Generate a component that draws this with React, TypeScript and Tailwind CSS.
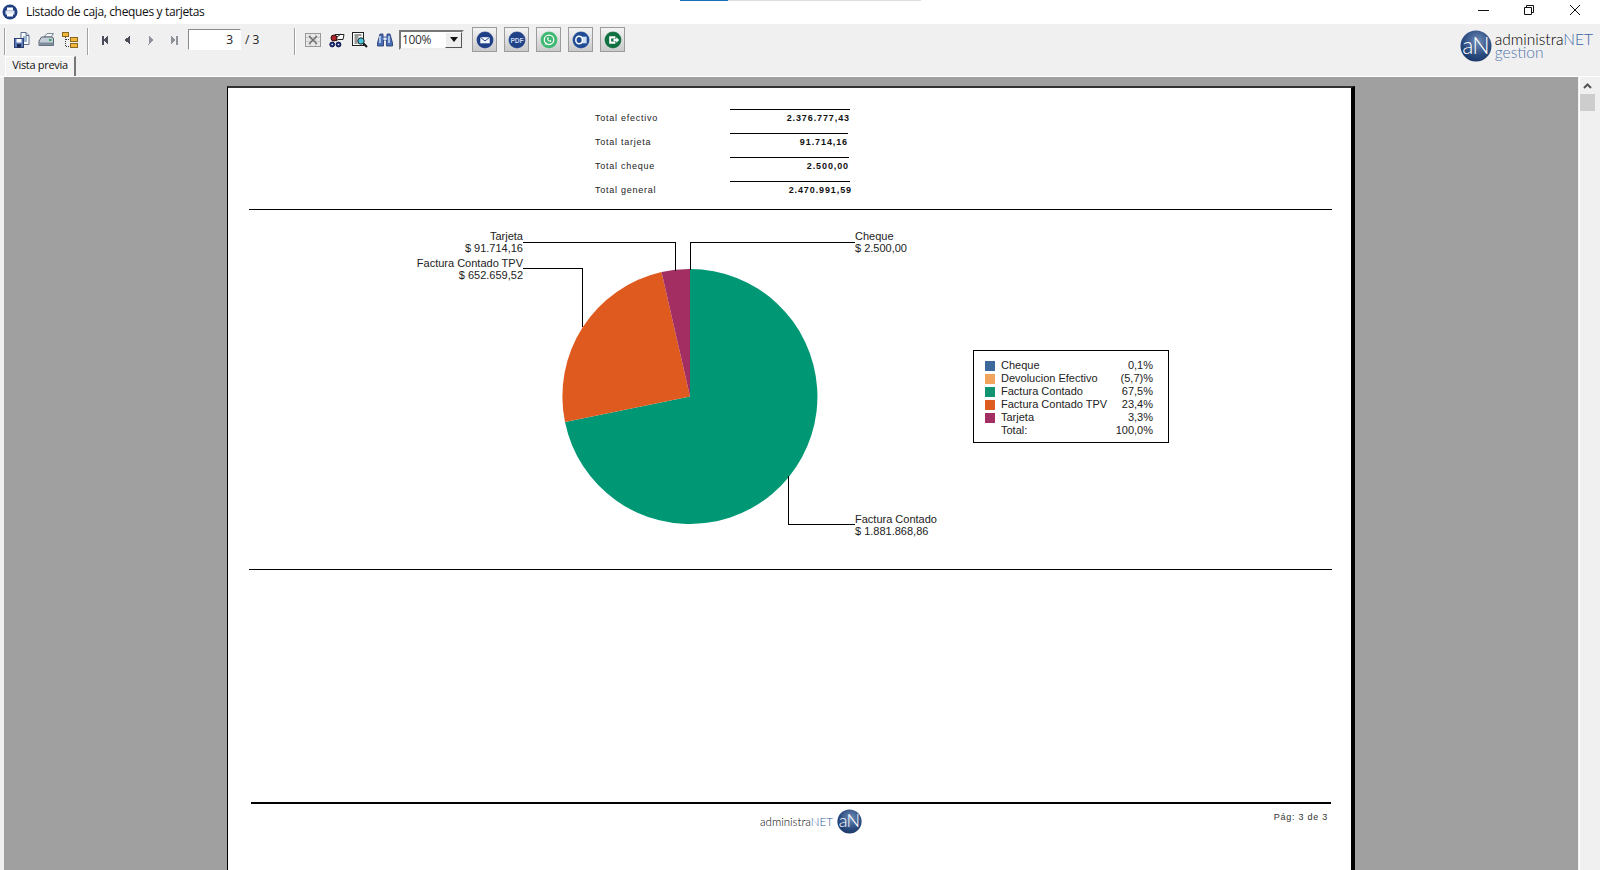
import React from "react";

const UI = "font-['Open_Sans','Noto_Sans',sans-serif]";
const RPT = "font-['Liberation_Sans',Arial,sans-serif]";

function Sep({ ml }: { ml: string }) {
  return <div className={`${ml} w-[2px] h-[27px] self-end border-l border-[#a0a0a0] border-r-white border-r`} />;
}

function SaveIcon() {
  return (
    <svg width="16" height="16" viewBox="0 0 16 16">
      <path d="M7 0.5h5l3 3v9H7z" fill="#fff" stroke="#5a6f8f" />
      <path d="M12 .5v3h3" fill="#cfd8e6" stroke="#5a6f8f" />
      <path d="M9 5h4M9 7h4M9 9h4" stroke="#3b6ea5" />
      <rect x="0.5" y="6.5" width="9" height="9" fill="#5a78b5" stroke="#2c3f74" />
      <rect x="2.5" y="7" width="5" height="3.5" fill="#fff" />
      <rect x="3" y="12" width="4" height="3.5" fill="#1d2c57" />
    </svg>
  );
}
function PrintIcon() {
  return (
    <svg width="16" height="14" viewBox="0 0 16 14">
      <path d="M6 4L9 .6h6.5L13 4z" fill="#fff" stroke="#6f7f92" />
      <path d="M1 8L3.5 4h10q2 0 2 2v6.5H1z" fill="#c3ced9" stroke="#55626f" />
      <path d="M1 9.5h14.5v3H1z" fill="#7d8b9b" />
      <rect x="11" y="6" width="2.5" height="2" fill="#3aa65c" />
    </svg>
  );
}
function TreeIcon() {
  return (
    <svg width="16" height="16" viewBox="0 0 16 16" shapeRendering="crispEdges">
      <rect x="0.5" y="0.5" width="6" height="4" fill="#f2b63c" stroke="#8a6a20" />
      <rect x="8.5" y="5.5" width="6.5" height="4" fill="#f2b63c" stroke="#8a6a20" />
      <rect x="8.5" y="11.5" width="6.5" height="4" fill="#f2b63c" stroke="#8a6a20" />
      <path d="M3.5 5v9.5H8M4 7.5h4" stroke="#333" strokeDasharray="1 1" fill="none" />
    </svg>
  );
}
function Nav({ kind }: { kind: "first" | "prev" | "next" | "last" }) {
  const color = kind === "first" || kind === "prev" ? "#4a4f57" : "#8f949b";
  return (
    <svg width="16" height="16" viewBox="0 0 16 16" shapeRendering="crispEdges">
      {kind === "first" && <rect x="5" y="3.5" width="1.5" height="9" fill={color} />}
      {kind === "first" && <path d="M11 3.5v9L6.5 8z" fill={color} />}
      {kind === "prev" && <path d="M11 3.5v9L5.5 8z" fill={color} />}
      {kind === "next" && <path d="M5.5 3.5v9L11 8z" fill={color} />}
      {kind === "last" && <path d="M5 3.5v9L10 8z" fill={color} />}
      {kind === "last" && <rect x="10" y="3.5" width="1.5" height="9" fill={color} />}
    </svg>
  );
}
function XBoxIcon() {
  return (
    <svg width="16" height="14" viewBox="0 0 16 14" shapeRendering="crispEdges">
      <rect x="0.5" y="0.5" width="15" height="13" fill="#e8e8e8" stroke="#9a9a9a" />
      <path d="M1 4h14M5 1v12M10 1v12M1 8h14" stroke="#c9c9c9" />
      <path d="M4 3l8 8M12 3l-8 8" stroke="#6a6a6a" strokeWidth="1.4" shapeRendering="auto" />
    </svg>
  );
}
function GearIcon() {
  return (
    <svg width="16" height="16" viewBox="0 0 16 16">
      <path d="M6 2.5h9l-1 5H9L7 9" fill="#fff" stroke="#222" />
      <path d="M8 5l4-3" stroke="#222" />
      <circle cx="5" cy="6" r="3" fill="#a6252a" stroke="#3a0d10" />
      <circle cx="3.2" cy="12.5" r="2.4" fill="#1c2f8a" stroke="#0b1240" />
      <circle cx="3.2" cy="12.5" r="0.8" fill="#fff" />
      <circle cx="9.5" cy="12.5" r="2.4" fill="#1c2f8a" stroke="#0b1240" />
      <circle cx="9.5" cy="12.5" r="0.8" fill="#fff" />
    </svg>
  );
}
function DocSearchIcon() {
  return (
    <svg width="16" height="16" viewBox="0 0 16 16">
      <rect x="0.5" y="0.5" width="11" height="13" fill="#fff" stroke="#222" />
      <path d="M2.5 3h7M2.5 5h4M2.5 7h3M2.5 9h3M2.5 11h3" stroke="#333" />
      <circle cx="9" cy="9" r="3.2" fill="#46c6d8" stroke="#222" />
      <path d="M11.5 11.5L15 15" stroke="#111" strokeWidth="2" />
    </svg>
  );
}
function BinocularsIcon() {
  return (
    <svg width="16" height="14" viewBox="0 0 16 14">
      <path d="M3 1h3v3h4V1h3l2.5 9v3H9.5V7h-3v6H.5v-3z" fill="#4b6fb3" stroke="#1f3370" strokeWidth="0.8" />
      <rect x="2" y="3" width="2" height="7" fill="#a9c1e8" />
      <rect x="11" y="3" width="2" height="7" fill="#a9c1e8" />
      <rect x="6.5" y="4.5" width="3" height="2.5" fill="#dbe6f6" />
    </svg>
  );
}

function RoundBtn({ ml, color, children }: { ml: string; color: string; children: React.ReactNode }) {
  return (
    <div className={`${ml} w-[25px] h-[25px] flex items-center justify-center border border-[#9c9c9c] bg-gradient-to-b from-[#f4f4f4] to-[#c9c9c9]`}>
      <svg width="18" height="18" viewBox="0 0 19 19">
        <circle cx="9.5" cy="9.5" r="9" fill={color} />
        <circle cx="9.5" cy="9.5" r="9" fill="none" stroke="#fff" strokeOpacity="0.25" />
        {children}
      </svg>
    </div>
  );
}

function LogoMark({ size }: { size: number }) {
  const gid = `lg${size}`;
  return (
    <svg width={size} height={size} viewBox="0 0 32 32" className="shrink-0">
      <defs>
        <radialGradient id={gid} cx="0.55" cy="0.35" r="0.75">
          <stop offset="0" stopColor="#6f8db8" />
          <stop offset="0.6" stopColor="#2c4c80" />
          <stop offset="1" stopColor="#14305f" />
        </radialGradient>
      </defs>
      <circle cx="16" cy="16" r="15.5" fill={`url(#${gid})`} />
      <text x="15.5" y="23.5" textAnchor="middle" fill="#fff" fontSize="23" fontFamily="Lato, sans-serif" fontWeight="300" letterSpacing="-1">aN</text>
    </svg>
  );
}

const totals = [
  { label: "Total efectivo", value: "2.376.777,43", lineW: "w-[120px]", valPr: "pr-0" },
  { label: "Total tarjeta", value: "91.714,16", lineW: "w-[118px]", valPr: "pr-0" },
  { label: "Total cheque", value: "2.500,00", lineW: "w-[119px]", valPr: "pr-0" },
  { label: "Total general", value: "2.470.991,59", lineW: "w-[120px]", valPr: "-mr-[2px]" },
];

const legend = [
  { name: "Cheque", pct: "0,1%", swatch: "bg-[#3d689c]" },
  { name: "Devolucion Efectivo", pct: "(5,7)%", swatch: "bg-[#f0a45e]" },
  { name: "Factura Contado", pct: "67,5%", swatch: "bg-[#119472]" },
  { name: "Factura Contado TPV", pct: "23,4%", swatch: "bg-[#dd5a20]" },
  { name: "Tarjeta", pct: "3,3%", swatch: "bg-[#a32f62]" },
  { name: "Total:", pct: "100,0%", swatch: "" },
];

function ChartLabel({ pos, right, name, value }: { pos: string; right?: boolean; name: string; value: string }) {
  return (
    <div className={`absolute ${pos} ${right ? "text-right" : "text-left"} text-[11px] leading-[12px] text-[#222] whitespace-nowrap`}>
      <div>{name}</div>
      <div>{value}</div>
    </div>
  );
}

export default function App() {
  return (
    <div className={`w-[1600px] h-[870px] overflow-hidden flex flex-col bg-[#f0f0f0] ${UI}`}>
      {/* title bar */}
      <div className="relative h-6 shrink-0 bg-white flex items-center">
        <div className="absolute left-[680px] top-0 w-[48px] h-px bg-[#1a6fb5]" />
        <div className="absolute left-[728px] top-0 w-[193px] h-px bg-[#dedede]" />
        <svg width="16" height="16" viewBox="0 0 16 16" className="ml-[2px] mb-[1px]">
          <circle cx="8" cy="8" r="7.5" fill="#1f3f80" />
          <path d="M5 3.5h6v3H5z" fill="#fff" />
          <path d="M3.5 6.5h9v4h-9z" fill="#dfe6f2" />
          <path d="M5 9.5h6v3H5z" fill="#fff" />
        </svg>
        <span className="ml-2 text-[12px] leading-none tracking-[-0.35px] text-[#111] mb-[1px]">Listado de caja, cheques y tarjetas</span>
        <div className="ml-auto mb-[4px] flex items-center">
          <svg width="46" height="20" viewBox="0 0 46 20"><path d="M18 10.5h11" stroke="#111" /></svg>
          <svg width="46" height="20" viewBox="0 0 46 20">
            <path d="M18.5 7.5h7v7h-7zM20.5 7.5v-2h7v7h-2" fill="none" stroke="#111" />
          </svg>
          <svg width="46" height="20" viewBox="0 0 46 20" className="mr-[2px]">
            <path d="M18 5l10 10M28 5L18 15" stroke="#111" />
          </svg>
        </div>
      </div>

      {/* toolbar */}
      <div className="h-[52px] shrink-0 flex bg-[#f0f0f0]">
        <div className="flex flex-col">
          <div className="h-[31px] flex items-center">
            <Sep ml="ml-[4px]" />
            <div className="ml-[8px]"><SaveIcon /></div>
            <div className="ml-[8px]"><PrintIcon /></div>
            <div className="ml-[8px]"><TreeIcon /></div>
            <Sep ml="ml-[9px]" />
            <div className="ml-[8px]"><Nav kind="first" /></div>
            <div className="ml-[6px]"><Nav kind="prev" /></div>
            <div className="ml-[8px]"><Nav kind="next" /></div>
            <div className="ml-[7px]"><Nav kind="last" /></div>
            <div className="ml-[6px] w-[53px] h-[21px] bg-white border border-[#8a8a8a] border-r-white border-b-white flex items-center justify-end pr-[7px] text-[12px] text-[#222]">3</div>
            <span className="ml-[4px] w-[14px] text-[12px] text-[#222] whitespace-nowrap">/ 3</span>
            <Sep ml="ml-[35px]" />
            <div className="ml-[9px]"><XBoxIcon /></div>
            <div className="ml-[8px]"><GearIcon /></div>
            <div className="ml-[7px]"><DocSearchIcon /></div>
            <div className="ml-[9px]"><BinocularsIcon /></div>
            <div className="ml-[6px] w-[65px] h-[20px] bg-white border-2 border-[#777] border-r-[#eee] border-b-[#eee] flex items-center">
              <span className="flex-1 pl-[1px] text-[12px] leading-none text-[#333] tracking-[-0.4px]">100%</span>
              <div className="w-[17px] h-full bg-[#eee] border border-b-[#555] border-r-[#555] border-t-white border-l-white flex items-center justify-center">
                <svg width="8" height="5" viewBox="0 0 8 5"><path d="M0 0h8L4 5z" fill="#111" /></svg>
              </div>
            </div>
            <RoundBtn ml="ml-[8px]" color="#1e3f86">
              <path d="M4.5 6.5h10v6.5h-10z" fill="#f2f5fb" />
              <path d="M4.5 6.5l5 4 5-4" fill="none" stroke="#1e3f86" />
            </RoundBtn>
            <RoundBtn ml="ml-[7px]" color="#1f4288">
              <text x="9.5" y="12.2" textAnchor="middle" fill="#c9d6ee" fontSize="7" fontWeight="700" fontFamily="Liberation Sans, sans-serif">PDF</text>
            </RoundBtn>
            <RoundBtn ml="ml-[7px]" color="#3fb873">
              <circle cx="9.5" cy="9.3" r="5" fill="none" stroke="#fff" strokeWidth="1.3" />
              <path d="M5 14.5l1-3 2 2z" fill="#fff" />
              <path d="M7.5 7.2q0 4 4 4.4l.6-1.3-1.4-.7-.6.6q-1-.5-1.4-1.5l.6-.6-.7-1.4z" fill="#fff" />
            </RoundBtn>
            <RoundBtn ml="ml-[7px]" color="#1f4a94">
              <rect x="9.5" y="6" width="6" height="7" fill="#cfe0f5" />
              <ellipse cx="7.5" cy="9.5" rx="3.5" ry="4" fill="#1f4a94" stroke="#fff" strokeWidth="1.6" />
            </RoundBtn>
            <RoundBtn ml="ml-[7px]" color="#11703f">
              <path d="M5.5 5.5h6.5v2.5h-4.5v3H12v2.5H5.5z" fill="#fff" />
              <path d="M10 8.3h3V6.5l3 3-3 3v-1.8h-3z" fill="#fff" />
            </RoundBtn>
          </div>
          <div className="h-[21px] flex items-end pl-[5px]">
            <div className="w-[71px] h-[20px] pb-[5px] bg-[#f4f4f4] border-l border-l-white border-t border-t-white border-r-2 border-r-[#777] flex items-center justify-center text-[11px] leading-none text-[#111] tracking-[-0.3px]">Vista previa</div>
          </div>
        </div>
        <div className="ml-auto mr-[7px] mt-[6px] self-start flex items-center">
          <LogoMark size={32} />
          <div className="ml-[3px] flex flex-col font-['Lato',sans-serif] text-[15.5px] leading-[13px] font-light">
            <div className="text-black whitespace-nowrap">administra<span className="text-[#3b65a5]">NET</span></div>
            <div className="text-[#4f75ab] whitespace-nowrap">gestion</div>
          </div>
        </div>
      </div>
      <div className="h-px shrink-0 bg-white" />

      {/* main */}
      <div className="flex-1 min-h-0 flex pl-[4px]">
        <div className="w-[1574px] bg-[#a0a0a0] overflow-hidden">
          {/* report page */}
          <div className={`ml-[223px] mt-[9px] w-[1128px] h-[800px] bg-white border-l border-t-2 border-r-4 border-black border-t-[#333] ${RPT}`}>
            {/* totals */}
            <div className="pt-[21px]">
              {totals.map((t) => (
                <div key={t.label} className="flex h-[24px]">
                  <div className="ml-[367px] w-[135px] pt-[3px] text-[9px] leading-[12px] tracking-[0.75px] text-[#222]">{t.label}</div>
                  <div className={`${t.lineW} border-t border-black pt-[2px] text-right`}>
                    <div className={`${t.valPr} text-[9px] leading-[12px] tracking-[0.9px] font-bold text-[#111]`}>{t.value}</div>
                  </div>
                </div>
              ))}
            </div>
            <div className="mt-[4px] ml-[21px] w-[1083px] h-px bg-black" />

            {/* chart */}
            <div className="relative h-[359px]">
              <svg className="absolute inset-0" width="1123" height="359" viewBox="228 210 1123 359">
                <path d="M690 396.5 L690 269 A127.5 127.5 0 1 1 565 422 Z" fill="#009874" />
                <path d="M690 396.5 L565 422 A127.5 127.5 0 0 1 661.5 272 Z" fill="#de5a1f" />
                <path d="M690 396.5 L661.5 272 A127.5 127.5 0 0 1 690 269 Z" fill="#a32f62" />
                <g fill="none" stroke="#000" shapeRendering="crispEdges">
                  <path d="M523 242.5H675.5V271" />
                  <path d="M855 242.5H690.5V270" />
                  <path d="M523 268.5H582.5V327" />
                  <path d="M788.5 476V524.5H855" />
                </g>
              </svg>
              <ChartLabel pos="right-[828px] top-[20px]" right name="Tarjeta" value="$ 91.714,16" />
              <ChartLabel pos="right-[828px] top-[47px]" right name="Factura Contado TPV" value="$ 652.659,52" />
              <ChartLabel pos="left-[627px] top-[20px]" name="Cheque" value="$ 2.500,00" />
              <ChartLabel pos="left-[627px] top-[303px]" name="Factura Contado" value="$ 1.881.868,86" />
              <div className="absolute left-[745px] top-[140px] w-[196px] h-[93px] border border-black pl-[11px] pr-[15px] pt-[8px] text-[11px] text-[#222]">
                {legend.map((l) => (
                  <div key={l.name} className="h-[13px] flex items-center leading-[13px]">
                    <div className={`w-[10px] h-[10px] ${l.swatch}`} />
                    <span className="ml-[6px] whitespace-nowrap">{l.name}</span>
                    <span className="ml-auto whitespace-nowrap">{l.pct}</span>
                  </div>
                ))}
              </div>
            </div>
            <div className="ml-[21px] w-[1083px] h-px bg-black" />

            {/* footer */}
            <div className="mt-[232px] ml-[23px] w-[1080px] h-[2px] bg-black" />
            <div className="ml-[23px] w-[1080px] flex items-start">
              <div className="ml-[509px] mt-[5px] flex items-center">
                <span className="font-['Lato',sans-serif] font-light text-[11.5px] leading-none text-black whitespace-nowrap">administra<span className="text-[#2f5a9a]">NET</span></span>
                <div className="ml-[4px]"><LogoMark size={25} /></div>
              </div>
              <div className="ml-auto mr-[3px] mt-[7px] text-[9px] leading-[12px] tracking-[0.75px] text-[#333]">Pág: 3 de 3</div>
            </div>
          </div>
        </div>

        {/* scrollbar */}
        <div className="ml-[1px] w-[21px] border-l border-white flex flex-col">
          <div className="h-[17px] flex items-center justify-center pr-[5px]">
            <svg width="9" height="6" viewBox="0 0 9 6"><path d="M1 5l3.5-3.5L8 5" fill="none" stroke="#555" strokeWidth="2" /></svg>
          </div>
          <div className="w-[15px] h-[17px] bg-[#cdcdcd]" />
        </div>
      </div>
    </div>
  );
}
